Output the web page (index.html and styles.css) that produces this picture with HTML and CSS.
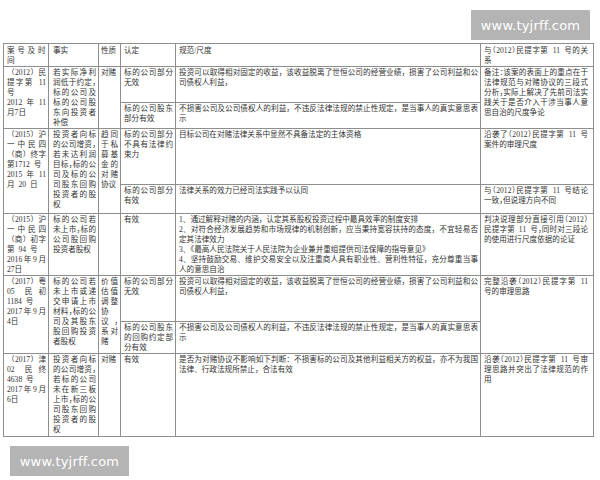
FILE: index.html
```html
<!DOCTYPE html>
<html lang="zh-CN">
<head>
<meta charset="utf-8">
<title>对赌协议案例</title>
<link rel="stylesheet" href="styles.css">
</head>
<body>
<div class="page">
  <div class="wm-row"><div class="wm">www.tyjrff.com</div></div>
  <table class="cases">
    <colgroup>
      <col class="c1"><col class="c2"><col class="c3"><col class="c4"><col class="c5"><col class="c6">
    </colgroup>
    <tr class="h-head">
      <td class="k1 spread">案号及时间</td>
      <td class="k2">事实</td>
      <td class="k3">性质</td>
      <td class="k4">认定</td>
      <td class="k5">规范/尺度</td>
      <td class="k6">与（2012）民提字第 11 号的关系</td>
    </tr>
    <tr class="h-1a">
      <td class="k1" rowspan="2">（2012）民提字第 11 号<br>2012 年 11 月7日</td>
      <td class="k2" rowspan="2">若实际净利润低于约定，标的公司及标的公司股东向投资者补偿</td>
      <td class="k3" rowspan="2">对赌</td>
      <td class="k4">标的公司部分无效</td>
      <td class="k5">投资可以取得相对固定的收益，该收益脱离了世恒公司的经营业绩，损害了公司利益和公司债权人利益，</td>
      <td class="k6" rowspan="2">备注：该案的表面上的重点在于法律规范与对赌协议的三段式分析，实际上解决了先前司法实践关于是否介入干涉当事人意思自治的尺度争论</td>
    </tr>
    <tr class="h-1b">
      <td class="k4">标的公司股东部分有效</td>
      <td class="k5">不损害公司及公司债权人的利益，不违反法律法规的禁止性规定，是当事人的真实意思表示</td>
    </tr>
    <tr class="h-2a">
      <td class="k1" rowspan="2">（2015）沪一中民四（商）终字第1712 号<br>2015 年 11 月 20 日</td>
      <td class="k2" rowspan="2">投资者向标的公司增资，若未达利润目标，标的公司及标的公司股东回购投资者的股权</td>
      <td class="k3" rowspan="2">趋同于私募基金的对赌协议</td>
      <td class="k4">标的公司部分不具有法律约束力</td>
      <td class="k5">目标公司在对赌法律关系中显然不具备法定的主体资格</td>
      <td class="k6">沿袭了（2012）民提字第 11 号案件的审理尺度</td>
    </tr>
    <tr class="h-2b">
      <td class="k4">标的公司部分有效</td>
      <td class="k5">法律关系的效力已经司法实践予以认同</td>
      <td class="k6">与（2012）民提字第 11 号结论一致，但说理方向不同</td>
    </tr>
    <tr class="h-3">
      <td class="k1">（2015）沪一中民四（商）初字第 94 号<br>2016年9月27日</td>
      <td class="k2">标的公司若未上市，标的公司股回购投资者股权</td>
      <td class="k3"></td>
      <td class="k4">有效</td>
      <td class="k5">1、通过解释对赌的内涵，认定其系股权投资过程中最具效率的制度安排<br>2、对符合经济发展趋势和市场规律的机制创新，应当秉持宽容扶持的态度，不宜轻易否定其法律效力<br>3、《最高人民法院关于人民法院为企业兼并重组提供司法保障的指导意见》<br>4、坚持鼓励交易、维护交易安全以及注重商人具有职业性、营利性特征，充分尊重当事人的意思自治</td>
      <td class="k6">判决说理部分直接引用（2012）民提字第 11 号，同时对三段论的使用进行尺度依据的论证</td>
    </tr>
    <tr class="h-4a">
      <td class="k1" rowspan="2">（2017）粤 05 民初 1184 号<br>2017年9月<span class="nw">4日</span></td>
      <td class="k2" rowspan="2">标的公司若未上市或递交申请上市材料，标的公司及其股东股回购投资者股权</td>
      <td class="k3" rowspan="2">价值估值调整协议，系对赌</td>
      <td class="k4">标的公司部分无效</td>
      <td class="k5">投资可以取得相对固定的收益，该收益脱离了世恒公司的经营业绩，损害了公司利益和公司债权人利益，</td>
      <td class="k6" rowspan="2">完整沿袭（2012）民提字第 11 号的审理思路</td>
    </tr>
    <tr class="h-4b">
      <td class="k4">标的公司股东的回购约定部分有效</td>
      <td class="k5">不损害公司及公司债权人的利益，不违反法律法规的禁止性规定，是当事人的真实意思表示</td>
    </tr>
    <tr class="h-5">
      <td class="k1">（2017）津 02 民终 4638 号<br>2017年9月<span class="nw">6日</span></td>
      <td class="k2">投资者向标的公司增资，若标的公司未在新三板上市，标的公司股东回购投资者的股权</td>
      <td class="k3">对赌</td>
      <td class="k4">有效</td>
      <td class="k5">是否为对赌协议不影响如下判断：不损害标的公司及其他利益相关方的权益，亦不为我国法律、行政法规所禁止，合法有效</td>
      <td class="k6">沿袭（2012）民提字第 11 号审理思路并突出了法律规范的作用</td>
    </tr>
  </table>
  <div class="wm wm-bottom">www.tyjrff.com</div>
</div>
</body>
</html>
```

FILE: styles.css
```css
html, body {
  margin: 0;
  padding: 0;
  background: #ffffff;
}

.page {
  width: 590px;
  padding: 10px 7px 0 3px;
}

.wm-row {
  display: flex;
  justify-content: flex-end;
  padding-right: 3px;
}

.wm {
  width: 119px;
  height: 30px;
  background: #b4b4b4;
  color: #ffffff;
  font-family: "DejaVu Sans", "Liberation Sans", sans-serif;
  font-size: 13px;
  display: flex;
  align-items: center;
  justify-content: center;
  letter-spacing: 0.2px;
}

.wm-bottom {
  margin-top: 9px;
  margin-left: 7px;
}

.cases {
  margin-top: 3px;
  width: 590px;
  border-collapse: collapse;
  table-layout: fixed;
  font-family: "Liberation Serif", "Noto Sans CJK SC", serif;
  font-size: 7.6px;
  line-height: 10px;
  word-spacing: 2px;
  color: #333333;
}

.c1 { width: 45px; }
.c2 { width: 50px; }
.c3 { width: 22px; }
.c4 { width: 55px; }
.c5 { width: 305px; }
.c6 { width: 113px; }

.cases td {
  border: 1px solid #8e8e8e;
  padding: 1px 2px 0 3px;
  vertical-align: top;
  text-align: justify;
  overflow: hidden;
}

/* narrow columns: compressed (half-width) punctuation, as in the source */
.cases td.k2,
.cases td.k3,
.cases td.k4,
.cases td.k6 {
  font-feature-settings: "halt";
}

.cases td.k2 { padding-left: 4px; padding-right: 2px; }
.cases td.k3 { padding-left: 2px; padding-right: 2px; }
.cases td.k6 { padding-left: 3px; padding-right: 5px; }

.cases td.spread { letter-spacing: 0.5px; }

.nw { white-space: nowrap; }

.h-head { height: 22px; }
.h-head td { padding-top: 2px; }
.h-1a { height: 35px; }
.h-1b { height: 25px; }
.h-2a { height: 56px; }
.h-2b { height: 29px; }
.h-3 { height: 61px; }
.h-4a { height: 46px; }
.h-4b { height: 31px; }
.h-5 { height: 83px; }
```
